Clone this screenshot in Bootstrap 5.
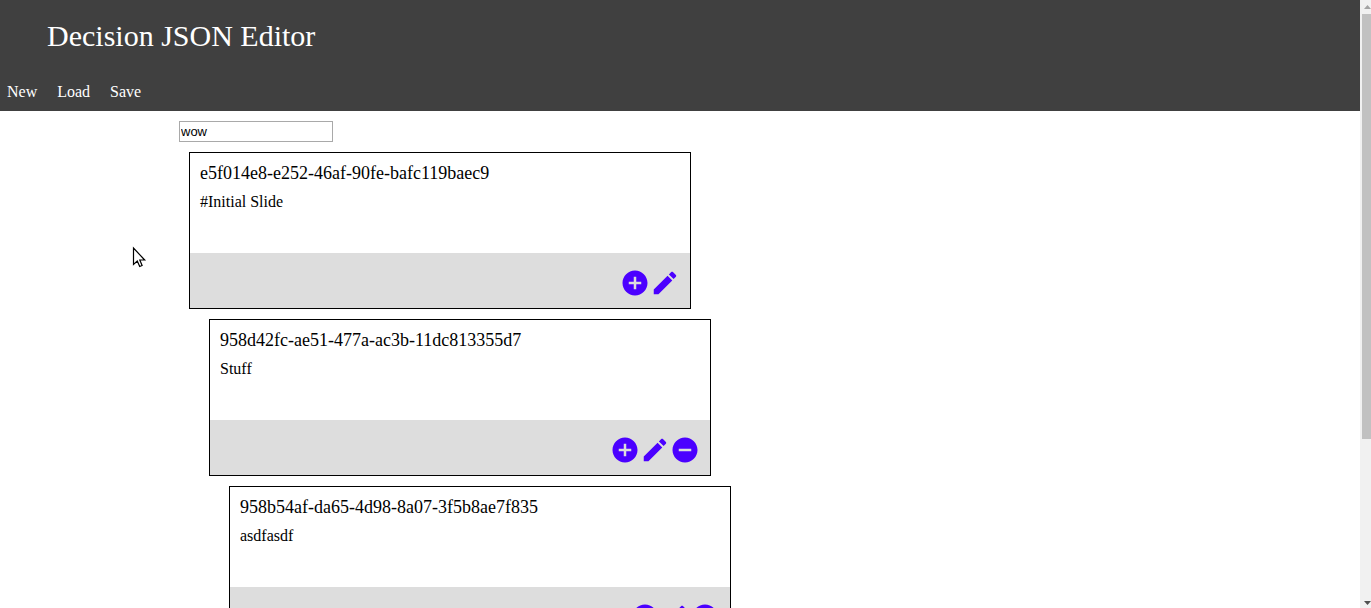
<!DOCTYPE html>
<html lang="en">
<head>
<meta charset="utf-8">
<meta name="viewport" content="width=device-width, initial-scale=1">
<title>Decision JSON Editor</title>
<link href="https://cdn.jsdelivr.net/npm/bootstrap@5.3.0/dist/css/bootstrap.min.css" rel="stylesheet">
<script src="https://cdn.jsdelivr.net/npm/bootstrap@5.3.0/dist/js/bootstrap.bundle.min.js" defer></script>
<style>
  body { font-family: "Liberation Serif", serif; font-size: 16px; line-height: 18px; color: #000; background: #fff; }
  .topbar { background: #404040; color: #fff; }
  .topbar h1 { font-size: 30px; line-height: 34px; padding: 19px 47px 0; margin-bottom: 30px; font-weight: 400; }
  .menu { gap: 20px; padding: 0 7px 10px; }
  .menu a { color: #fff; }
  .editor { max-width: 1002px; padding-top: 10px; }
  .doc-name { width: 154px; height: 21px; padding: 1px; border: 1px solid #a9a9a9; border-radius: 0; font: 13px "Liberation Sans", sans-serif; color: #000; }
  .branch { padding-left: 20px; }
  .tree { padding-left: 10px; }
  .slide { width: 502px; margin-top: 10px; border: 1px solid #000; border-radius: 0; color: #000; }
  .slide .card-body { min-height: 100px; padding: 10px; }
  .slide h2 { font-size: 18px; line-height: 20px; margin-bottom: 10px; font-weight: 400; }
  .slide .card-footer { background: #ddd; border: 0; border-radius: 0; padding: 15px 10px 10px; }
  .tool { width: 30px; height: 30px; color: #4b00ff; }
  .tool svg { width: 30px; height: 30px; fill: currentColor; }
  .rail { width: 11px; background: #f1f1f1; padding-left: 2px; }
  .rail svg { width: 9px; height: 14px; }
  .thumb { background: #c1c1c1; flex: 425 1 0; }
  .rest { flex: 155 1 0; }
  .pointer { left: 132px; top: 246px; width: 16px; height: 24px; }
</style>
</head>
<body>
<svg class="d-none">
  <symbol id="add" viewBox="0 0 24 24"><path d="M12 2C6.480 2 2 6.480 2 12s4.480 10 10 10 10-4.480 10-10S17.520 2 12 2zm5 11h-4v4h-2v-4H7v-2h4V7h2v4h4v2z"/></symbol>
  <symbol id="edit" viewBox="0 0 24 24"><path d="M3 17.250V21h3.750L17.810 9.940l-3.750-3.750L3 17.250zM20.710 7.040c.39-.39.39-1.020 0-1.410l-2.340-2.340c-.39-.39-1.020-.39-1.410 0l-1.830 1.830 3.750 3.750 1.830-1.830z"/></symbol>
  <symbol id="remove" viewBox="0 0 24 24"><path d="M12 2C6.480 2 2 6.480 2 12s4.480 10 10 10 10-4.480 10-10S17.520 2 12 2zm5 11H7v-2h10v2z"/></symbol>
</svg>
<div class="d-flex vh-100 overflow-hidden">
  <div class="flex-grow-1 overflow-hidden">
    <header class="topbar">
      <h1>Decision JSON Editor</h1>
      <nav class="menu d-flex" aria-label="File">
        <a class="text-decoration-none" href="#new">New</a>
        <a class="text-decoration-none" href="#load">Load</a>
        <a class="text-decoration-none" href="#save">Save</a>
      </nav>
    </header>
    <main class="editor mx-auto">
      <input class="doc-name d-block" type="text" value="wow" aria-label="Name">
      <div class="tree">
        <article class="card slide">
          <div class="card-body"><h2>e5f014e8-e252-46af-90fe-bafc119baec9</h2><p class="mb-0">#Initial Slide</p></div>
          <div class="card-footer d-flex justify-content-end">
            <button class="tool btn border-0 p-0 d-flex" type="button" aria-label="Add"><svg><use href="#add"/></svg></button>
            <button class="tool btn border-0 p-0 d-flex" type="button" aria-label="Edit"><svg><use href="#edit"/></svg></button>
          </div>
        </article>
        <div class="branch">
          <article class="card slide">
            <div class="card-body"><h2>958d42fc-ae51-477a-ac3b-11dc813355d7</h2><p class="mb-0">Stuff</p></div>
            <div class="card-footer d-flex justify-content-end">
              <button class="tool btn border-0 p-0 d-flex" type="button" aria-label="Add"><svg><use href="#add"/></svg></button>
              <button class="tool btn border-0 p-0 d-flex" type="button" aria-label="Edit"><svg><use href="#edit"/></svg></button>
              <button class="tool btn border-0 p-0 d-flex" type="button" aria-label="Remove"><svg><use href="#remove"/></svg></button>
            </div>
          </article>
          <div class="branch">
            <article class="card slide">
              <div class="card-body"><h2>958b54af-da65-4d98-8a07-3f5b8ae7f835</h2><p class="mb-0">asdfasdf</p></div>
              <div class="card-footer d-flex justify-content-end">
                <button class="tool btn border-0 p-0 d-flex" type="button" aria-label="Add"><svg><use href="#add"/></svg></button>
                <button class="tool btn border-0 p-0 d-flex" type="button" aria-label="Edit"><svg><use href="#edit"/></svg></button>
                <button class="tool btn border-0 p-0 d-flex" type="button" aria-label="Remove"><svg><use href="#remove"/></svg></button>
              </div>
            </article>
          </div>
        </div>
      </div>
    </main>
  </div>
  <div class="rail d-flex flex-column flex-shrink-0" aria-hidden="true">
    <svg viewBox="0 0 9 14"><path d="M2 9L5.500 5 9 9z" fill="#a3a3a3"/></svg>
    <div class="thumb"></div>
    <div class="rest"></div>
    <svg viewBox="0 0 9 14"><path d="M2 7L5.500 11 9 7z" fill="#505050"/></svg>
  </div>
</div>
<svg class="pointer position-absolute" viewBox="0 0 16 24" aria-hidden="true"><path d="M1.500 2V18.500L5.300 15l2.400 5.500 2.400-1L7.800 14h4.900z" fill="#fff" stroke="#000" stroke-width="1.200"/></svg>
</body>
</html>
